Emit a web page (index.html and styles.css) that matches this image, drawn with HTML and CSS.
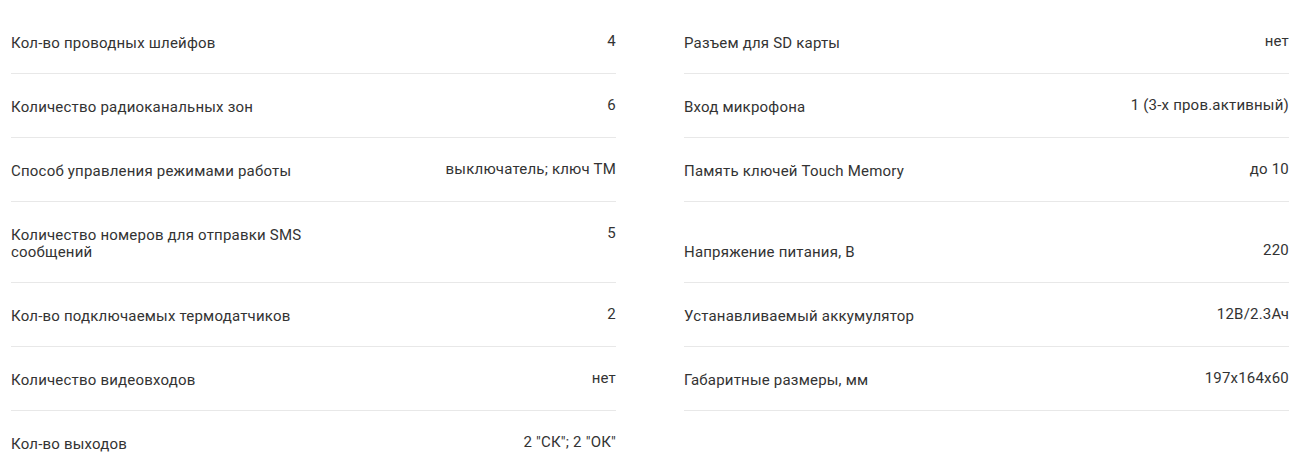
FILE: index.html
```html
<!DOCTYPE html>
<html lang="ru">
<head>
<meta charset="utf-8">
<link rel="stylesheet" href="styles.css">
</head>
<body>
<div class="specs">
  <div class="cell"><div class="row"><span class="label">Кол-во проводных шлейфов</span><span class="value">4</span></div></div>
  <div class="cell"><div class="row"><span class="label">Разъем для SD карты</span><span class="value">нет</span></div></div>
  <div class="cell"><div class="row"><span class="label">Количество радиоканальных зон</span><span class="value">6</span></div></div>
  <div class="cell"><div class="row"><span class="label">Вход микрофона</span><span class="value">1 (3-х пров.активный)</span></div></div>
  <div class="cell"><div class="row"><span class="label">Способ управления режимами работы</span><span class="value">выключатель; ключ ТМ</span></div></div>
  <div class="cell"><div class="row"><span class="label">Память ключей Touch Memory</span><span class="value">до 10</span></div></div>
  <div class="cell"><div class="row"><span class="label">Количество номеров для отправки SMS сообщений</span><span class="value">5</span></div></div>
  <div class="cell"><div class="row"><span class="label">Напряжение питания, В</span><span class="value">220</span></div></div>
  <div class="cell"><div class="row"><span class="label">Кол-во подключаемых термодатчиков</span><span class="value">2</span></div></div>
  <div class="cell"><div class="row"><span class="label">Устанавливаемый аккумулятор</span><span class="value">12В/2.3Ач</span></div></div>
  <div class="cell"><div class="row"><span class="label">Количество видеовходов</span><span class="value">нет</span></div></div>
  <div class="cell"><div class="row"><span class="label">Габаритные размеры, мм</span><span class="value">197x164x60</span></div></div>
  <div class="cell"><div class="row"><span class="label">Кол-во выходов</span><span class="value">2 "СК"; 2 "ОК"</span></div></div>
</div>
</body>
</html>
```
FILE: styles.css
```css
html, body {
  margin: 0;
  padding: 0;
  background: #fff;
}
body {
  padding: 10px 12px 0 11px;
  font-family: Roboto, "Liberation Sans", sans-serif;
  font-size: 15px;
  letter-spacing: 0.2px;
  color: #333;
}
.specs {
  display: grid;
  grid-template-columns: 605px 605px;
  column-gap: 68px;
}
.cell {
  display: flex;
  flex-direction: column;
  justify-content: flex-end;
  padding: 25px 0 21px;
  border-bottom: 1px solid #e8e8e8;
}
.row {
  display: flex;
  justify-content: space-between;
  align-items: flex-start;
  gap: 20px;
}
.label {
  line-height: 17px;
  max-width: 330px;
}
.value {
  line-height: 17px;
  margin-top: -2px;
  text-align: right;
}
```
